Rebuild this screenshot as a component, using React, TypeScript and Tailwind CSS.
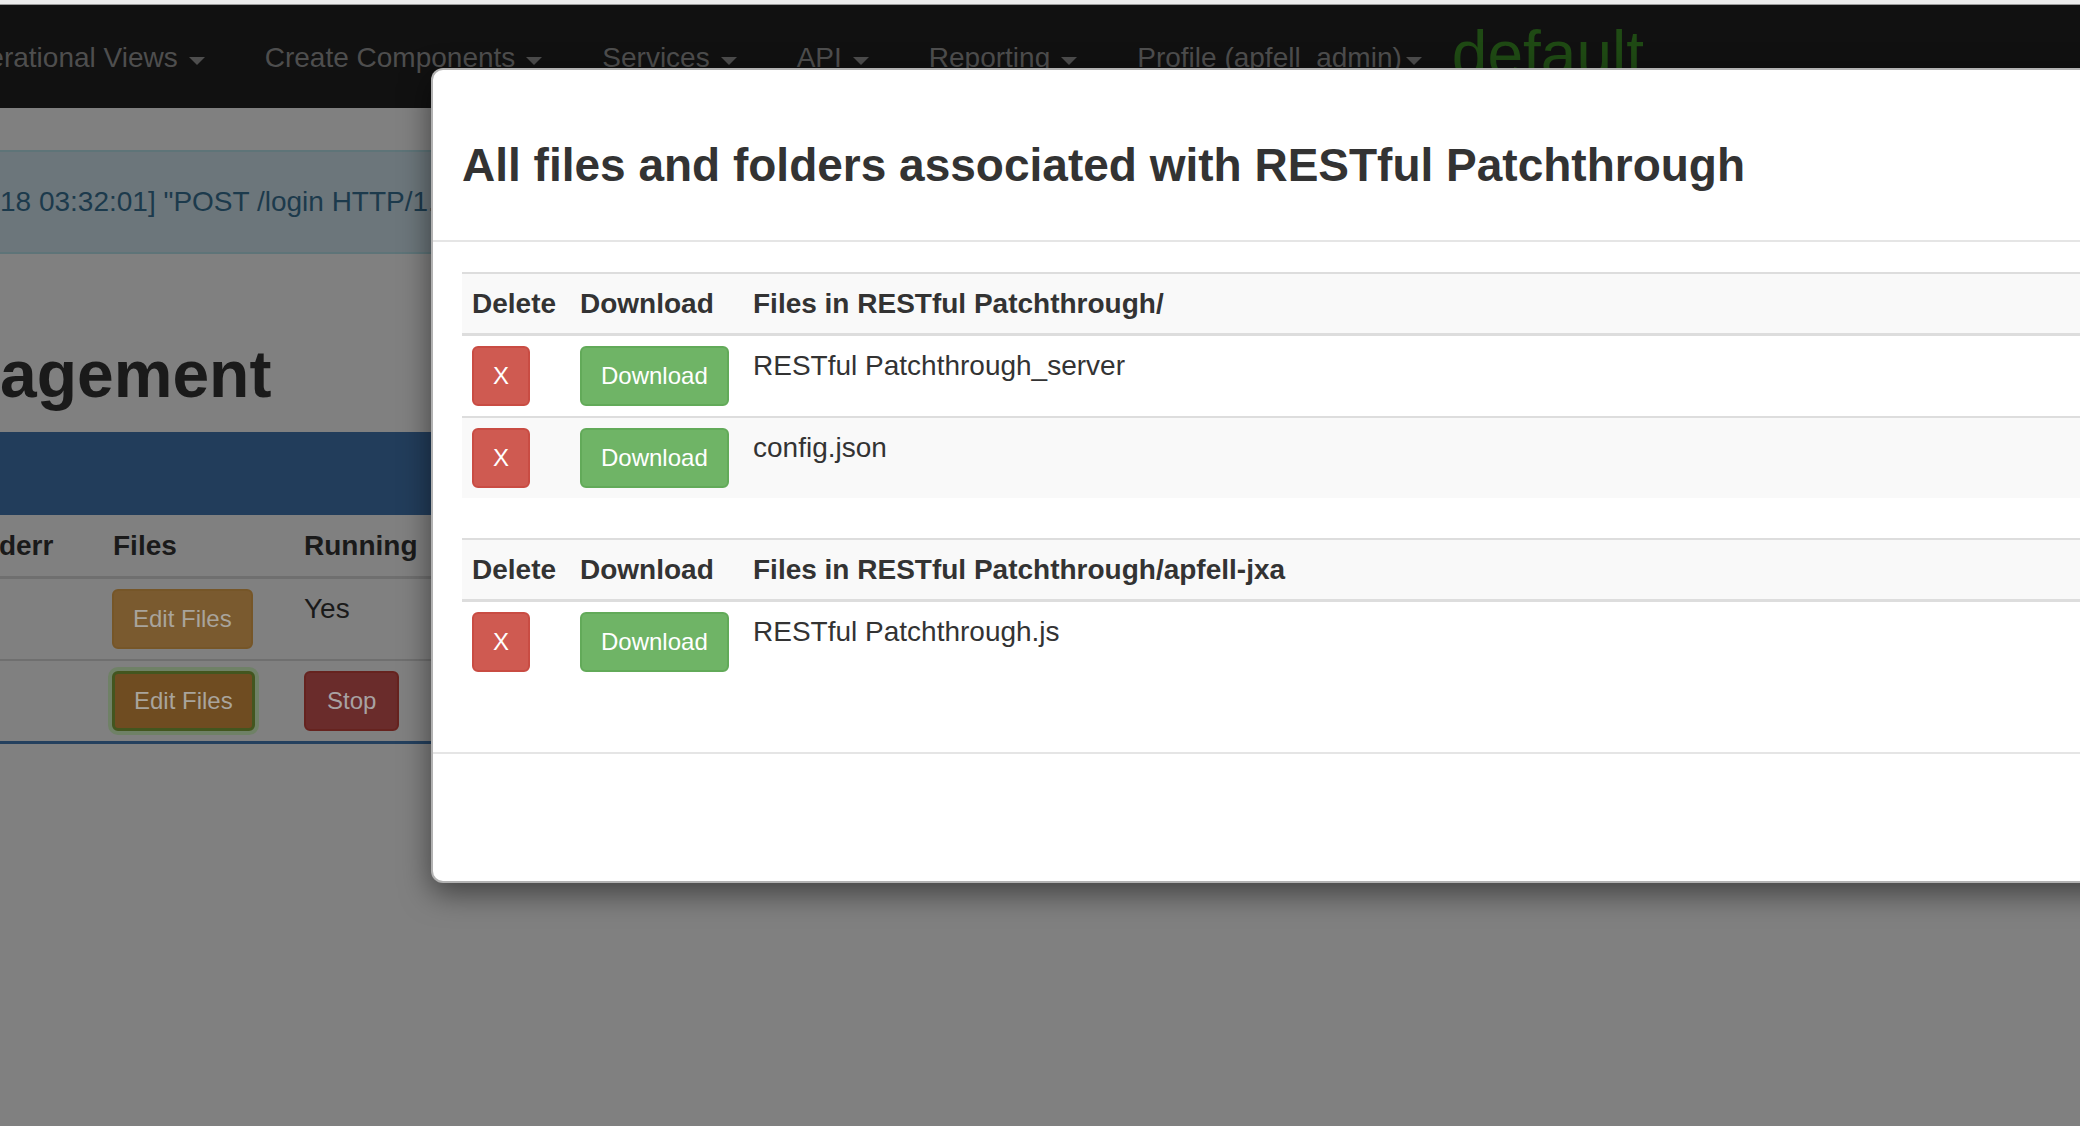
import React from "react";

const Caret = ({ ml = "ml-[11px]" }: { ml?: string }) => (
  <span
    className={`${ml} inline-block w-0 h-0 border-t-[8px] border-t-[#4e4e4e] border-x-[8px] border-x-transparent translate-y-[3px]`}
  />
);

const NavItem = ({ label, caretMl }: { label: string; caretMl?: string }) => (
  <div className="flex items-center px-[30px] whitespace-nowrap text-[28px] leading-[40px] text-[#4e4e4e]">
    <span>{label}</span>
    <Caret ml={caretMl} />
  </div>
);

const XBtn = () => (
  <button className="h-[60px] px-[19px] rounded-[6px] bg-[#cf5a51] border-2 border-[#c94c43] text-white text-[24px] leading-[36px]">
    X
  </button>
);

const DlBtn = () => (
  <button className="h-[60px] px-[19px] rounded-[6px] bg-[#6fb466] border-2 border-[#62aa59] text-white text-[24px] leading-[36px] whitespace-nowrap">
    Download
  </button>
);

const HeaderRow = ({ title }: { title: string }) => (
  <div className="grid grid-cols-[108px_173px_1fr] bg-[#f9f9f9] border-t-2 border-b-[3px] border-[#dddddd] text-[28px] leading-[39px] font-bold text-[#333333]">
    <div className="px-[10px] py-[10px] whitespace-nowrap">Delete</div>
    <div className="px-[10px] py-[10px] whitespace-nowrap">Download</div>
    <div className="px-[10px] py-[10px] whitespace-nowrap">{title}</div>
  </div>
);

const FileRow = ({ name, shaded, border }: { name: string; shaded?: boolean; border?: boolean }) => (
  <div
    className={`grid grid-cols-[108px_173px_1fr] ${shaded ? "bg-[#f9f9f9]" : "bg-white"} ${
      border ? "border-b-2 border-[#dddddd]" : ""
    } text-[28px] leading-[40px] text-[#333333]`}
  >
    <div className="px-[10px] py-[10px]">
      <XBtn />
    </div>
    <div className="px-[10px] py-[10px]">
      <DlBtn />
    </div>
    <div className="px-[10px] py-[10px] whitespace-nowrap">{name}</div>
  </div>
);

export default function App() {
  return (
    <div
      className="relative w-[2080px] h-[1126px] overflow-hidden bg-[#808080]"
      style={{ fontFamily: '"Liberation Sans", Arial, Helvetica, sans-serif' }}
    >
      {/* top strip */}
      <div className="h-[4px] bg-[#ececec]" />
      <div className="h-[1px] bg-[#9a9a9a]" />

      {/* navbar (dimmed) */}
      <nav className="h-[103px] bg-[#111111] flex items-center pt-[3px] -ml-[79px]">
        <NavItem label="Operational Views" />
        <NavItem label="Create Components" />
        <NavItem label="Services" />
        <NavItem label="API" />
        <NavItem label="Reporting" />
        <NavItem label="Profile (apfell_admin)" caretMl="ml-[4px]" />
        <div className="self-start mt-[14px] text-[64px] leading-[64px] text-[#1f4a14] whitespace-nowrap">
          default
        </div>
      </nav>

      {/* page content (dimmed) */}
      <main>
        <div className="mt-[42px] border-y-2 border-[#5e7478] bg-[#6c767b] py-[30px] text-[28px] leading-[40px] text-[#1c3a4c] whitespace-nowrap">
          18 03:32:01] "POST /login HTTP/1.1" 200 1024
        </div>

        <h1 className="mt-[83px] text-[66px] leading-[75px] font-bold text-[#1a1a1a] whitespace-nowrap">
          agement
        </h1>

        <div className="mt-[20px] h-[83px] bg-[#223d5b]" />

        <div className="border-b-[3px] border-[#24405e]">
          <div className="grid grid-cols-[97px_191px_1fr] border-b-[3px] border-[#6f6f6f] pt-[11px] pb-[10px] text-[28px] leading-[40px] font-bold text-[#1a1a1a]">
            <div className="whitespace-nowrap">
              <span className="-ml-[26px]">stderr</span>
            </div>
            <div className="pl-[16px]">Files</div>
            <div className="pl-[16px]">Running</div>
          </div>
          <div className="grid grid-cols-[97px_191px_1fr] border-b-2 border-[#6f6f6f] py-[10px] text-[28px] leading-[40px] text-[#1a1a1a]">
            <div />
            <div className="pl-[15px]">
              <button className="h-[60px] px-[19px] rounded-[6px] bg-[#7a5a2f] border-2 border-[#765628] text-[#a9a49c] text-[24px] leading-[36px] whitespace-nowrap">
                Edit Files
              </button>
            </div>
            <div className="pl-[16px]">Yes</div>
          </div>
          <div className="grid grid-cols-[97px_191px_1fr] py-[10px] text-[28px] leading-[40px] text-[#1a1a1a]">
            <div />
            <div className="pl-[15px]">
              <button className="h-[60px] px-[19px] rounded-[6px] bg-[#6f4c21] border-[3px] border-[#43561f] shadow-[0_0_0_4px_rgba(96,130,80,0.55)] text-[#a9a49c] text-[24px] leading-[36px] whitespace-nowrap">
                Edit Files
              </button>
            </div>
            <div className="pl-[16px]">
              <button className="h-[60px] px-[21px] rounded-[6px] bg-[#6a2c2b] border-2 border-[#66231f] text-[#a8a2a2] text-[24px] leading-[36px]">
                Stop
              </button>
            </div>
          </div>
        </div>
      </main>

      {/* modal */}
      <div className="absolute left-[431px] top-[68px] w-[1720px] bg-white border-2 border-black/30 rounded-[12px] shadow-[0_10px_30px_rgba(0,0,0,0.5)]">
        <div className="pt-[70px] pb-[49px] px-[29px] border-b-2 border-[#e5e5e5]">
          <h4 className="text-[46px] leading-[51px] font-bold text-[#333333] whitespace-nowrap">
            All files and folders associated with RESTful Patchthrough
          </h4>
        </div>
        <div className="pt-[30px] pb-[30px] px-[29px]">
          <div className="mb-[40px]">
            <HeaderRow title="Files in RESTful Patchthrough/" />
            <FileRow name="RESTful Patchthrough_server" border />
            <FileRow name="config.json" shaded />
          </div>
          <div className="mb-[40px]">
            <HeaderRow title="Files in RESTful Patchthrough/apfell-jxa" />
            <FileRow name="RESTful Patchthrough.js" />
          </div>
        </div>
        <div className="h-[129px] border-t-2 border-[#e5e5e5]" />
      </div>
    </div>
  );
}
